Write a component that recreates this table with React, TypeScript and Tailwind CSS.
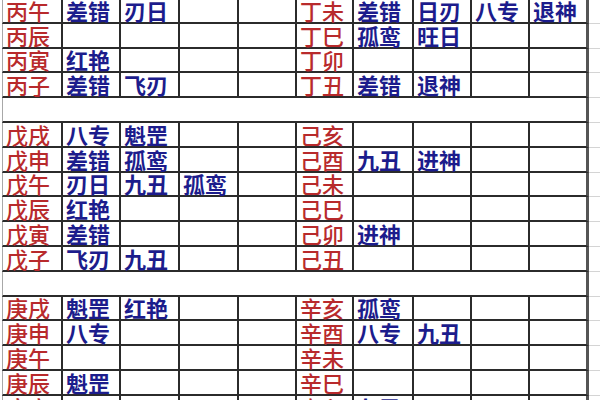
const rows: (string[] | null)[] = [
  ["丙午", "差错", "刃日", "", "", "丁未", "差错", "日刃", "八专", "退神"],
  ["丙辰", "", "", "", "", "丁巳", "孤鸾", "旺日", "", ""],
  ["丙寅", "红艳", "", "", "", "丁卯", "", "", "", ""],
  ["丙子", "差错", "飞刃", "", "", "丁丑", "差错", "退神", "", ""],
  null,
  ["戊戌", "八专", "魁罡", "", "", "己亥", "", "", "", ""],
  ["戊申", "差错", "孤鸾", "", "", "己酉", "九丑", "进神", "", ""],
  ["戊午", "刃日", "九丑", "孤鸾", "", "己未", "", "", "", ""],
  ["戊辰", "红艳", "", "", "", "己巳", "", "", "", ""],
  ["戊寅", "差错", "", "", "", "己卯", "进神", "", "", ""],
  ["戊子", "飞刃", "九丑", "", "", "己丑", "", "", "", ""],
  null,
  ["庚戌", "魁罡", "红艳", "", "", "辛亥", "孤鸾", "", "", ""],
  ["庚申", "八专", "", "", "", "辛酉", "八专", "九丑", "", ""],
  ["庚午", "", "", "", "", "辛未", "", "", "", ""],
  ["庚辰", "魁罡", "", "", "", "辛巳", "", "", "", ""],
  ["庚寅", "", "", "", "", "辛卯", "九丑", "", "", ""],
];

const Cell = ({ text, col }: { text: string; col: number }) => {
  const red = col === 0 || col === 5;
  return (
    <div
      className={
        "flex items-center pl-[3px] text-[22px] leading-[21px] whitespace-nowrap border-b-2 border-b-[#2b2b2b] " +
        (col === 9 ? "border-r-[3px] border-r-[#555] " : "border-r-2 border-r-[#2b2b2b] ") +
        (col === 0 ? "border-l border-l-[#a8a8a8] " : "") +
        (red ? "text-[#b82a2c] font-medium" : "text-[#1c1c8c] font-bold")
      }
    >
      {text}
    </div>
  );
};

export default function App() {
  return (
    <div className="w-[600px] h-[400px] overflow-hidden bg-white font-['Noto_Sans_CJK_SC','Noto_Sans',sans-serif]">
      <div className="ml-[2px] -mt-[1px] grid grid-cols-[61px_58px_59px_59px_58px_57px_60px_58px_58px_59px_1fr] auto-rows-[24.8px]">
        {rows.map((row, r) =>
          row ? (
            <div key={r} className="contents">
              {row.map((t, c) => (
                <Cell key={c} text={t} col={c} />
              ))}
              <div className="border-b border-b-[#d4d4d4]" />
            </div>
          ) : (
            <div key={r} className="contents">
              <div className="col-span-10 border-l border-l-[#a8a8a8] border-b-2 border-b-[#2b2b2b] border-r-[3px] border-r-[#555]" />
              <div className="border-b border-b-[#d4d4d4]" />
            </div>
          )
        )}
      </div>
    </div>
  );
}
